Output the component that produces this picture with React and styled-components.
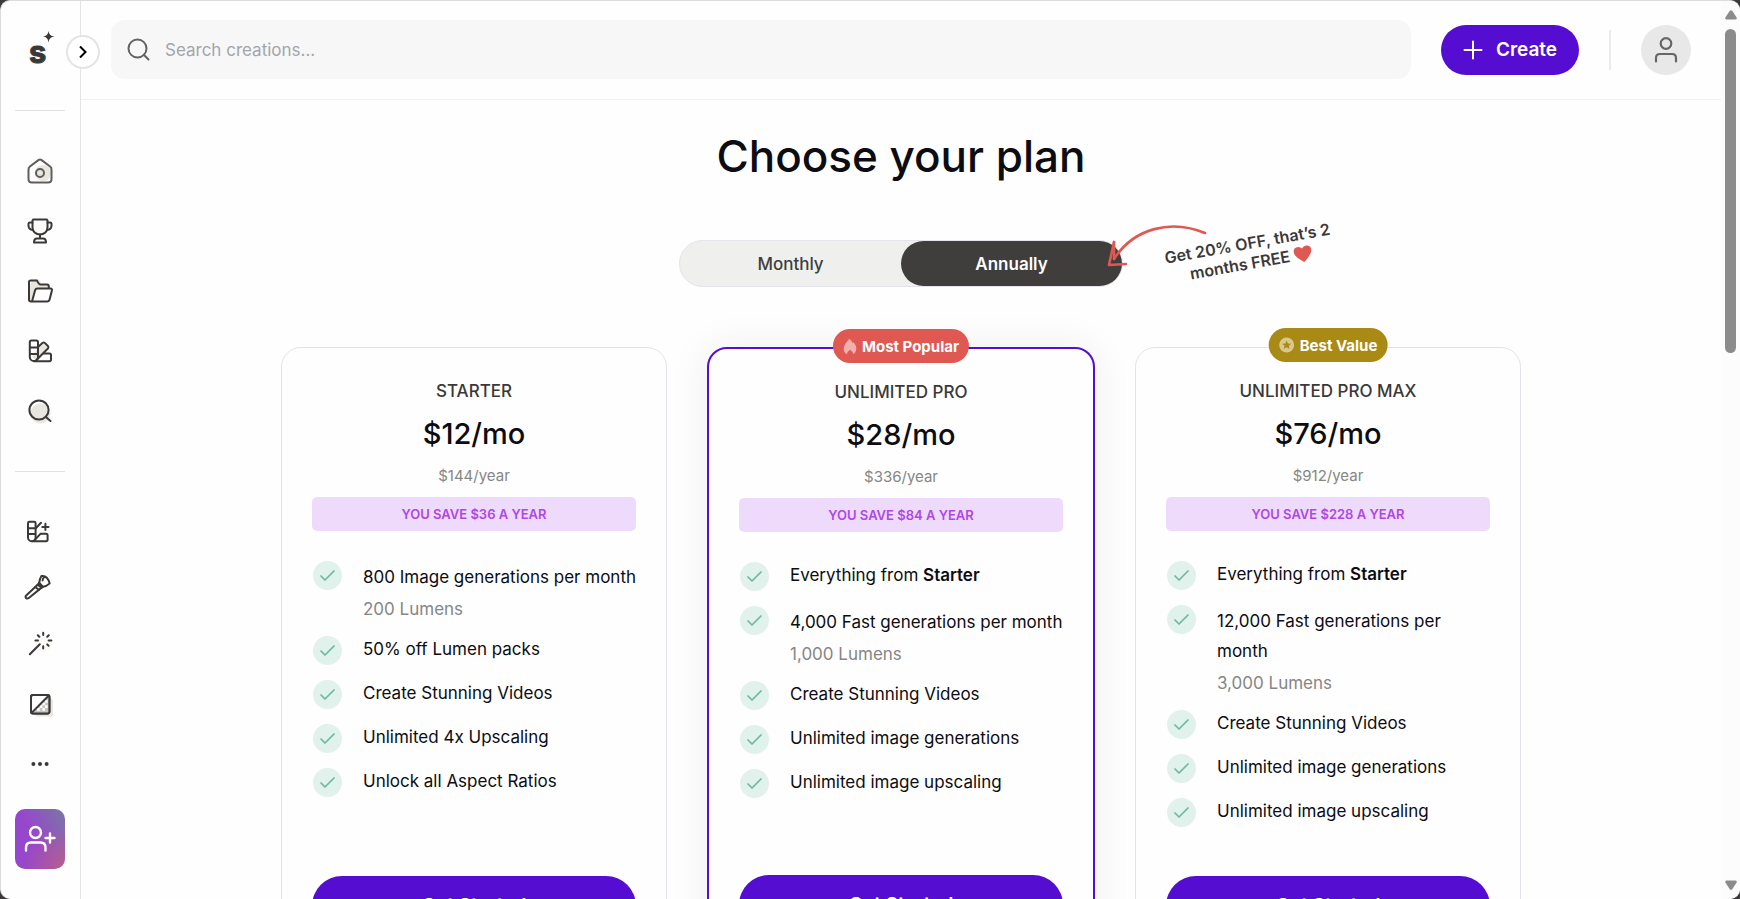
import React, { useState } from 'react';
import styled, { createGlobalStyle } from 'styled-components';

const GlobalStyle = createGlobalStyle`
  *, *::before, *::after {
    box-sizing: border-box;
  }

  body {
    margin: 0;
    background-color: #3c3a3a;
    color: #0c0c12;
    font-family: Inter, "Liberation Sans", sans-serif;
  }

  h1, h2, p, ul {
    margin: 0;
    padding: 0;
  }

  button, input {
    font-family: inherit;
  }

  button {
    cursor: pointer;
  }
`;

const Window = styled.div`
  display: flex;
  height: 100vh;
  overflow: hidden;
  background-color: #fefefe;
  border-top: 1px solid #dcdcdc;
  border-left: 1px solid #dcdcdc;
  border-radius: 10px;
`;

const Sidebar = styled.nav`
  position: relative;
  flex: none;
  width: 80px;
  padding-right: 1px;
  display: flex;
  flex-direction: column;
  align-items: center;
  border-right: 1px solid #e4e4e6;
`;

const LogoLink = styled.a`
  display: flex;
  align-items: center;
  justify-content: center;
  width: 100%;
  height: 109px;
  padding-bottom: 10px;
`;

const ExpandButton = styled.button`
  position: absolute;
  top: 34px;
  right: -20px;
  width: 34px;
  height: 34px;
  padding: 0;
  display: flex;
  align-items: center;
  justify-content: center;
  background-color: #fff;
  border: 2px solid #e4e4e4;
  border-radius: 50%;
`;

const SideDivider = styled.hr`
  flex: none;
  width: 50px;
  height: 1px;
  margin: 0;
  border: none;
  background-color: #e2e2e2;
`;

const SideGroup = styled.div`
  width: 100%;
  padding-top: 30px;
  padding-bottom: ${props => (props.$last ? '15px' : '30px')};
`;

const SideItem = styled.a`
  display: flex;
  align-items: center;
  justify-content: center;
  height: ${props => props.$height || 60}px;
  color: #3a3938;
`;

const InviteButton = styled.button`
  flex: none;
  display: flex;
  align-items: center;
  justify-content: center;
  width: 50px;
  height: 60px;
  padding: 0;
  border: none;
  border-radius: 10px;
  background: radial-gradient(circle at 100% 100%, #b75f8c 0%, rgba(183, 95, 140, 0) 55%),
    linear-gradient(60deg, #9747cb 45%, #7a78a4 100%);
`;

const Content = styled.div`
  flex: 1;
  min-width: 0;
  display: flex;
  flex-direction: column;
  overflow: hidden;
`;

const Header = styled.header`
  flex: none;
  display: flex;
  align-items: center;
  gap: 30px;
  padding: 19px 30px 20px;
  border-bottom: 1px solid #f1f1f1;
`;

const SearchBox = styled.label`
  flex: 1;
  display: flex;
  align-items: center;
  height: 59px;
  padding: 0 16px;
  gap: 15px;
  background-color: #f7f7f7;
  border-radius: 14px;
`;

const SearchInput = styled.input`
  flex: 1;
  min-width: 0;
  padding: 0;
  border: none;
  outline: none;
  background: transparent;
  font-size: 17px;
  color: #3a3938;

  &::placeholder {
    color: #a3a5ad;
    opacity: 1;
  }
`;

const CreateButton = styled.button`
  display: flex;
  align-items: center;
  justify-content: center;
  gap: 13px;
  width: 138px;
  height: 50px;
  padding: 0;
  border: none;
  border-radius: 25px;
  background-color: #550dd1;
  color: #fff;
  font-size: 19px;
  font-weight: 600;
`;

const HeaderDivider = styled.span`
  width: 2px;
  height: 40px;
  background-color: #ececec;
`;

const Avatar = styled.button`
  display: flex;
  align-items: center;
  justify-content: center;
  width: 50px;
  height: 50px;
  padding: 0;
  border: none;
  border-radius: 50%;
  background-color: #e8e8e8;
`;

const Main = styled.main`
  flex: 1;
  min-height: 0;
  display: flex;
  flex-direction: column;
  align-items: center;
  padding: 29px 30px 0;
`;

const PageTitle = styled.h1`
  font-size: 44px;
  line-height: 54px;
  font-weight: 500;
`;

const BillingRow = styled.div`
  position: relative;
  margin-top: 57px;
`;

const Billing = styled.div`
  display: flex;
  width: 444px;
  height: 47px;
  border: 1px solid #e4e4ea;
  border-radius: 24px;
  background-color: #efefed;
`;

const BillingOption = styled.button`
  flex: 1;
  padding: 0;
  border: none;
  border-radius: 24px;
  background-color: ${props => (props.$active ? '#403e3c' : 'transparent')};
  color: ${props => (props.$active ? '#fff' : '#403e3c')};
  font-size: 17px;
  font-weight: ${props => (props.$active ? 600 : 500)};
`;

const ArrowDrawing = styled.svg`
  position: absolute;
  top: -18px;
  left: 424px;
`;

const Offer = styled.p`
  position: absolute;
  top: -7px;
  left: 475px;
  width: 190px;
  transform: rotate(-10deg);
  text-align: center;
  font-size: 16px;
  line-height: 20px;
  font-weight: 600;
  color: #3a3938;

  svg {
    vertical-align: -3px;
  }
`;

const Plans = styled.div`
  flex: none;
  display: flex;
  gap: 40px;
  width: 100%;
  max-width: 1240px;
  margin-top: 60px;
`;

const Card = styled.section`
  position: relative;
  flex: 1 1 0;
  min-width: 0;
  display: flex;
  flex-direction: column;
  align-items: center;
  padding: 30px;
  background-color: #fefefe;
  border: ${props => (props.$featured ? '2px solid #550dd1' : '1px solid #e2e2ea')};
  border-radius: 20px;
  box-shadow: ${props => (props.$featured ? '0 0 40px rgba(0, 0, 0, 0.07)' : 'none')};
`;

const Badge = styled.span`
  position: absolute;
  top: -20px;
  left: 50%;
  transform: translateX(-50%);
  display: flex;
  align-items: center;
  gap: 5px;
  height: 34px;
  padding: 0 10px;
  border-radius: 17px;
  background-color: ${props => props.$color};
  color: #fff;
  font-size: 15px;
  font-weight: 700;
  white-space: nowrap;
`;

const PlanName = styled.h2`
  font-size: 17px;
  line-height: 27px;
  font-weight: 500;
  color: #3a3938;
`;

const Price = styled.p`
  margin-top: 9px;
  font-size: 29px;
  line-height: 40px;
  font-weight: 500;
`;

const Yearly = styled.p`
  margin-top: 11px;
  font-size: 15px;
  line-height: 22px;
  color: #868684;
`;

const Saving = styled.p`
  align-self: stretch;
  margin-top: 10px;
  border-radius: 5px;
  background-color: #eedbfc;
  color: #ae46e8;
  font-size: 13px;
  line-height: 34px;
  font-weight: 600;
  text-align: center;
`;

const Features = styled.ul`
  align-self: stretch;
  display: flex;
  flex-direction: column;
  gap: 15px;
  margin-top: 30px;
  margin-bottom: 49px;
  list-style: none;
`;

const Feature = styled.li`
  display: flex;
  align-items: flex-start;
  gap: 21px;
  font-size: 17px;
  line-height: ${props => (props.$tall ? '30px' : '26px')};

  b {
    font-weight: 600;
  }
`;

const Check = styled.span`
  flex: none;
  display: flex;
  align-items: center;
  justify-content: center;
  width: 29px;
  height: 29px;
  margin-left: 1px;
  border-radius: 50%;
  background-color: #e1f1eb;
`;

const FeatureText = styled.div`
  flex: 1;
  min-width: 0;
  margin-right: -4px;
  padding-top: ${props => (props.$tall ? '1px' : '0')};
`;

const Lumens = styled.p`
  padding-top: 5px;
  line-height: 24px;
  color: #868684;
`;

const StartButton = styled.button`
  align-self: stretch;
  height: 60px;
  margin-top: auto;
  padding: 0;
  border: none;
  border-radius: 30px;
  background-color: #550dd1;
  color: #fff;
  font-size: 19px;
  line-height: 24px;
  font-weight: 600;
`;

const ScrollRail = styled.div`
  flex: none;
  width: 19px;
  display: flex;
  flex-direction: column;
  align-items: center;
  padding: 9px 0;
  background-color: #fcfcfc;
`;

const ScrollThumb = styled.div`
  width: 11px;
  height: 324px;
  margin-top: 9px;
  margin-bottom: auto;
  border-radius: 6px;
  background-color: #8b8b8b;
`;

const Icon = ({ children }) => (
  <svg
    width="32"
    height="32"
    viewBox="-3 -3 32 32"
    fill="none"
    stroke="currentColor"
    strokeWidth="2"
    strokeLinecap="round"
    strokeLinejoin="round"
    aria-hidden="true"
  >
    {children}
  </svg>
);

const HomeIcon = () => (
  <Icon>
    <circle cx="16" cy="15" r="8" fill="#e9e6df" stroke="none" />
    <path
      stroke="#5f5e5c"
      d="M11.4 2.1 2.9 8.5Q1.5 9.6 1.5 11.4V21Q1.5 24.5 5 24.5H21Q24.5 24.5 24.5 21V11.4Q24.5 9.6 23.1 8.5L14.6 2.1Q13 1 11.4 2.1Z"
    />
    <circle cx="13" cy="15" r="4" stroke="#5f5e5c" />
  </Icon>
);

const TrophyIcon = () => (
  <Icon>
    <path fill="#fbfaf8" d="M6.5 1.5H19.5Q20.5 1.5 20.5 2.5V9.5A7.5 7 0 0 1 5.5 9.5V2.5Q5.5 1.5 6.5 1.5Z" />
    <path d="M5.5 4.5H3Q1.5 4.5 1.5 6V8Q1.8 11.5 6 12M20.5 4.5H23Q24.5 4.5 24.5 6V8Q24.2 11.5 20 12" />
    <path d="M13 16.5V20M10 20.5H16Q19 20.5 19 24.5H7Q7 20.5 10 20.5Z" />
  </Icon>
);

const FolderIcon = () => (
  <Icon>
    <path fill="#e9e6df" stroke="none" d="M3 8Q4 1 9.5 1Q14 2 14 6L21 7V10H9L5 22H3Z" />
    <path d="M2 21.5V4.2Q2 2.6 3.6 2.6H10Q12 6.6 13.5 6.6H20Q21.8 6.6 21.8 8.4V10.5" />
    <path
      fill="#fefefe"
      d="M5 23.4 8 12.4Q8.6 10.6 10.5 10.6H23.4Q25.4 10.6 24.9 12.6L22.6 21.4Q22.1 23.4 20.1 23.4H4Q2 23.4 2 21.4"
    />
  </Icon>
);

const SwatchIcon = () => (
  <Icon>
    <path fill="#e9e6df" stroke="none" d="M5 19 11 9 18 5 20 10 10 23Z" />
    <path d="M2.8 4.2Q2.8 2.6 4.4 2.6H9.4Q11 2.6 11 4.2V19A4.1 4.1 0 0 1 2.8 19ZM2.8 9.6H11M2.8 16H11" />
    <path d="M11 9 15.4 5Q16.8 3.8 18.1 5.1L20.9 8Q22 9.2 20.9 10.5L9 22.5" />
    <path d="M7 23.2H22.4Q24 23.2 24 21.6V17Q24 15.4 22.4 15.4H16.6" />
  </Icon>
);

const ExploreIcon = () => (
  <Icon>
    <circle cx="13.4" cy="15.5" r="10" fill="#e9e6df" stroke="none" />
    <circle cx="12" cy="12" r="9.6" />
    <path d="M18.9 18.9 23.5 23" />
  </Icon>
);

const SwatchPlusIcon = () => (
  <Icon>
    <path d="M1 4.2Q1 2.8 2.4 2.8H7.2Q8.6 2.8 8.6 4.2V18.4A3.8 3.8 0 0 1 1 18.4ZM1 9.2H8.6M1 15H8.6" />
    <path d="M8.6 9.5 14 3.8M5 22.2H19Q20.6 22.2 20.6 20.6V16.4Q20.6 14.8 19 14.8H13.4L7.4 21.4" />
    <path d="M18.4 4.8V11M15.3 7.9H21.5" />
  </Icon>
);

const BrushIcon = () => (
  <Icon>
    <path d="M10.6 10.8-.8 21.4Q-2 22.8-.9 24.1.4 25.1 1.8 24L14.6 13.6" />
    <path d="M10.6 10.8 12.2 8.8 15.8 12.8 14.6 13.6ZM8.3 13 11.8 15.8" />
    <path d="M12.2 8.8Q12.8 4.4 14.4 2Q20.4 1 22.7 9.4Q19.4 12.6 15.8 12.8ZM17.8 2.6Q15.4 4.6 15.6 6.4" />
  </Icon>
);

const WandIcon = () => (
  <Icon>
    <circle cx="17.5" cy="14" r="8" fill="#fbfaf7" stroke="none" />
    <path d="M2.8 24.2 12.8 14.2" />
    <path d="M16.2 2.8V5M16.2 16.2V18.6M8.4 10.6H11M21.6 10.6H24.4M10.8 5.2 12.4 6.8M21.8 5.2 20.2 6.8M20.2 14.4 21.6 15.8" />
  </Icon>
);

const ContrastIcon = () => (
  <Icon>
    <rect x="8.5" y="7.5" width="17.5" height="18" rx="2" fill="#e9e6df" stroke="none" />
    <rect x="4" y="4" width="18.4" height="18.4" rx="2" fill="#fefefe" />
    <path fill="#c7c5bf" stroke="none" d="M22 5V22H5Z" />
    <path
      stroke="#fefefe"
      strokeWidth="2.6"
      strokeLinecap="butt"
      d="M18 10.4H20.6M15.4 13H18M12.8 15.6H15.4M18 15.6H20.6M10 18.4H12.8M15.4 18.4H18"
    />
    <rect x="4" y="4" width="18.4" height="18.4" rx="2" />
    <path d="M4.8 21.6 21.6 4.8" />
  </Icon>
);

const MoreIcon = () => (
  <Icon>
    <g fill="currentColor" stroke="none">
      <circle cx="6.4" cy="13" r="2" />
      <circle cx="13" cy="13" r="2" />
      <circle cx="19.6" cy="13" r="2" />
    </g>
  </Icon>
);

const Logo = () => (
  <svg width="40" height="40" viewBox="0 0 40 40" aria-hidden="true">
    <text
      x="9"
      y="32"
      fill="#3a3938"
      stroke="#3a3938"
      strokeWidth="1"
      fontFamily="Inter, sans-serif"
      fontSize="31"
      fontWeight="700"
    >
      s
    </text>
    <path fill="#3a3938" d="M28.5 0Q29 5 34.5 5.5 29 6 28.5 11.5 28 6 23 5.5 28 5 28.5 0Z" />
  </svg>
);

const CheckIcon = () => (
  <svg width="17" height="13" viewBox="0 0 17 13" fill="none" aria-hidden="true">
    <path d="M2 7 6 11 15 2" stroke="#6cb8a0" strokeWidth="1.7" strokeLinecap="round" strokeLinejoin="round" />
  </svg>
);

const FlameIcon = () => (
  <svg width="14" height="17" viewBox="0 0 14 17" aria-hidden="true">
    <path
      fill="#f2b0ac"
      d="M6.8 0.8Q8.5 3 9.8 5L10.8 4.2Q13.4 7.5 13.4 10.8 13.2 14.5 10.4 16.2 10.2 14 7 11.8 4 14 3.8 16.2 .8 14.4 .7 10.8 .9 6 6.8 .8Z"
    />
  </svg>
);

const StarIcon = () => (
  <svg width="16" height="16" viewBox="0 0 16 16" aria-hidden="true">
    <circle cx="8" cy="8" r="7.5" fill="#d9c88d" />
    <path fill="#a88a14" d="M8 3.4 9.3 6.5 12.6 6.7 10.1 8.8 10.9 12 8 10.3 5.1 12 5.9 8.8 3.4 6.7 6.7 6.5Z" />
  </svg>
);

const mainLinks = [
  { label: 'Home', icon: HomeIcon },
  { label: 'Contests', icon: TrophyIcon },
  { label: 'Collections', icon: FolderIcon },
  { label: 'Styles', icon: SwatchIcon },
  { label: 'Explore', icon: ExploreIcon },
];

const toolLinks = [
  { label: 'Create style', icon: SwatchPlusIcon },
  { label: 'Retouch', icon: BrushIcon, height: 50 },
  { label: 'Enhance', icon: WandIcon, height: 62 },
  { label: 'Remove background', icon: ContrastIcon },
  { label: 'More', icon: MoreIcon },
];

const plans = [
  {
    name: 'STARTER',
    price: '$12/mo',
    yearly: '$144/year',
    saving: 'YOU SAVE $36 A YEAR',
    features: [
      { text: '800 Image generations per month', lumens: '200 Lumens' },
      { text: '50% off Lumen packs' },
      { text: 'Create Stunning Videos' },
      { text: 'Unlimited 4x Upscaling' },
      { text: 'Unlock all Aspect Ratios' },
    ],
  },
  {
    name: 'UNLIMITED PRO',
    featured: true,
    badge: { text: 'Most Popular', color: '#e05852', icon: FlameIcon },
    price: '$28/mo',
    yearly: '$336/year',
    saving: 'YOU SAVE $84 A YEAR',
    features: [
      { text: 'Everything from ', strong: 'Starter' },
      { text: '4,000 Fast generations per month', lumens: '1,000 Lumens' },
      { text: 'Create Stunning Videos' },
      { text: 'Unlimited image generations' },
      { text: 'Unlimited image upscaling' },
    ],
  },
  {
    name: 'UNLIMITED PRO MAX',
    badge: { text: 'Best Value', color: '#a88a14', icon: StarIcon },
    price: '$76/mo',
    yearly: '$912/year',
    saving: 'YOU SAVE $228 A YEAR',
    features: [
      { text: 'Everything from ', strong: 'Starter' },
      { text: '12,000 Fast generations per month', lumens: '3,000 Lumens' },
      { text: 'Create Stunning Videos' },
      { text: 'Unlimited image generations' },
      { text: 'Unlimited image upscaling' },
    ],
  },
];

const SideLinks = ({ links }) =>
  links.map(({ label, icon: LinkIcon, height }) => (
    <SideItem key={label} href="#" aria-label={label} $height={height}>
      <LinkIcon />
    </SideItem>
  ));

const PlanCard = ({ plan }) => {
  const BadgeIcon = plan.badge && plan.badge.icon;

  return (
    <Card $featured={plan.featured}>
      {plan.badge && (
        <Badge $color={plan.badge.color}>
          <BadgeIcon />
          {plan.badge.text}
        </Badge>
      )}
      <PlanName>{plan.name}</PlanName>
      <Price>{plan.price}</Price>
      <Yearly>{plan.yearly}</Yearly>
      <Saving>{plan.saving}</Saving>
      <Features>
        {plan.features.map(feature => (
          <Feature key={feature.text} $tall={Boolean(feature.lumens)}>
            <Check>
              <CheckIcon />
            </Check>
            <FeatureText $tall={Boolean(feature.lumens)}>
              {feature.text}
              {feature.strong && <b>{feature.strong}</b>}
              {feature.lumens && <Lumens>{feature.lumens}</Lumens>}
            </FeatureText>
          </Feature>
        ))}
      </Features>
      <StartButton type="button">Get Started</StartButton>
    </Card>
  );
};

const App = () => {
  const [billing, setBilling] = useState('Annually');

  return (
    <>
      <GlobalStyle />
      <Window>
        <Sidebar>
          <LogoLink href="#" aria-label="Home page">
            <Logo />
          </LogoLink>
          <ExpandButton type="button" aria-label="Expand menu">
            <svg width="10" height="14" viewBox="0 0 10 14" fill="none" aria-hidden="true">
              <path d="M2 1.5 7.5 7 2 12.5" stroke="#000" strokeWidth="2" />
            </svg>
          </ExpandButton>
          <SideDivider />
          <SideGroup>
            <SideLinks links={mainLinks} />
          </SideGroup>
          <SideDivider />
          <SideGroup $last>
            <SideLinks links={toolLinks} />
          </SideGroup>
          <InviteButton type="button" aria-label="Invite">
            <svg width="32" height="28" viewBox="0 0 32 28" fill="none" stroke="#fff" strokeWidth="2.4" strokeLinecap="round" aria-hidden="true">
              <circle cx="11.5" cy="7.5" r="5.5" />
              <path d="M2 25.5V22.5Q2 17.5 7 17.5H16.5Q21.5 17.5 21.5 22.5V25.5M26 8.5V17.5M21.5 13H30.5" />
            </svg>
          </InviteButton>
        </Sidebar>
        <Content>
          <Header>
            <SearchBox>
              <svg width="23" height="23" viewBox="0 0 23 23" fill="none" stroke="#636363" strokeWidth="2" aria-hidden="true">
                <circle cx="10.5" cy="10.5" r="9" />
                <path d="M16.8 16.8 21.5 21.5" strokeLinecap="round" />
              </svg>
              <SearchInput type="search" placeholder="Search creations..." aria-label="Search creations" />
            </SearchBox>
            <CreateButton type="button">
              <svg width="20" height="20" viewBox="0 0 20 20" stroke="#fff" strokeWidth="2" strokeLinecap="round" aria-hidden="true">
                <path d="M10 1.5V18.5M1.5 10H18.5" />
              </svg>
              Create
            </CreateButton>
            <HeaderDivider />
            <Avatar type="button" aria-label="Account">
              <svg width="24" height="26" viewBox="0 0 24 26" fill="none" stroke="#666" strokeWidth="2.2" strokeLinecap="round" aria-hidden="true">
                <circle cx="12" cy="6.5" r="5.3" />
                <path d="M2 24.5V21Q2 17 6 17H18Q22 17 22 21V24.5" />
              </svg>
            </Avatar>
          </Header>
          <Main>
            <PageTitle>Choose your plan</PageTitle>
            <BillingRow>
              <Billing>
                {['Monthly', 'Annually'].map(option => (
                  <BillingOption
                    key={option}
                    type="button"
                    $active={billing === option}
                    aria-pressed={billing === option}
                    onClick={() => setBilling(option)}
                  >
                    {option}
                  </BillingOption>
                ))}
              </Billing>
              <ArrowDrawing width="110" height="50" viewBox="0 0 110 50" fill="none" stroke="#e05852" strokeWidth="2.6" strokeLinecap="round" strokeLinejoin="round" aria-hidden="true">
                <path d="M102 11C68-3 31 6 11 37" />
                <path d="M11 20 6 43 23 42" />
                <path d="M11 20 11 37" />
              </ArrowDrawing>
              <Offer>
                Get 20% OFF, that’s 2 months FREE{' '}
                <svg width="18" height="17" viewBox="0 0 18 17" aria-hidden="true">
                  <path fill="#e05852" d="M9 16.6Q0 9.5 0 5 .3 .8 4.5 .6 7.6 .6 9 2.8 10.4 .6 13.5 .6 17.7 .8 18 5 18 9.5 9 16.6Z" />
                </svg>
              </Offer>
            </BillingRow>
            <Plans>
              {plans.map(plan => (
                <PlanCard key={plan.name} plan={plan} />
              ))}
            </Plans>
          </Main>
        </Content>
        <ScrollRail aria-hidden="true">
          <svg width="12" height="10" viewBox="0 0 12 10">
            <path fill="#8b8b8b" d="M4.8 .8Q6-.4 7.2 .8L11.6 7.6Q12 9.6 10.4 9.6H1.6Q0 9.6 .4 7.6Z" />
          </svg>
          <ScrollThumb />
          <svg width="12" height="10" viewBox="0 0 12 10">
            <path fill="#8b8b8b" d="M4.8 9.2Q6 10.4 7.2 9.2L11.6 2.4Q12 .4 10.4 .4H1.6Q0 .4 .4 2.4Z" />
          </svg>
        </ScrollRail>
      </Window>
    </>
  );
};

export default App;
